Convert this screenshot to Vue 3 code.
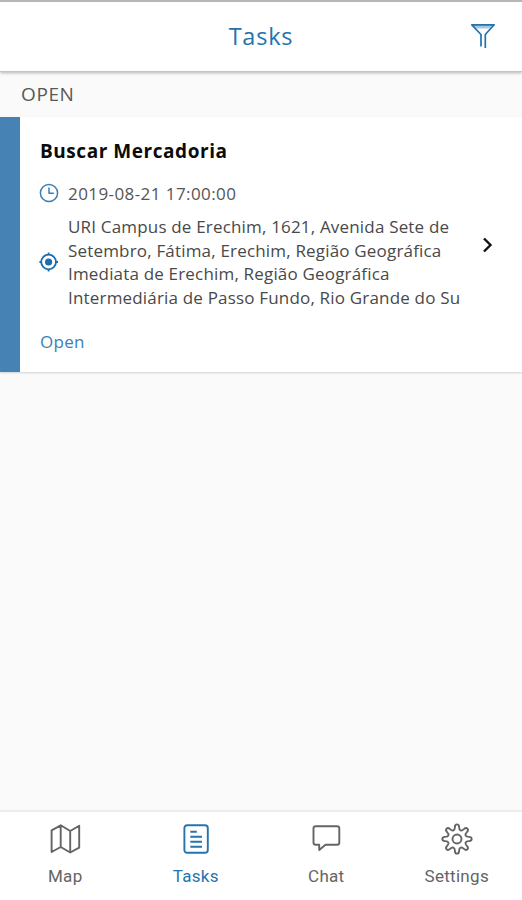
<script setup>
const address = [
  'URI Campus de Erechim, 1621, Avenida Sete de',
  'Setembro, Fátima, Erechim, Região Geográfica',
  'Imediata de Erechim, Região Geográfica',
  'Intermediária de Passo Fundo, Rio Grande do Su',
]

const tabs = [
  { id: 'map', label: 'Map' },
  { id: 'tasks', label: 'Tasks', active: true },
  { id: 'chat', label: 'Chat' },
  { id: 'settings', label: 'Settings' },
]

// Outline of an eight-toothed gear centred on (16, 16), corners softened with curves
const gearPath = (() => {
  const points = []
  for (let tooth = 0; tooth < 8; tooth++) {
    for (const [radius, offset] of [[14.8, -8], [14.8, 8], [9.4, 13], [9.4, 32]]) {
      const angle = ((tooth * 45 + offset - 90) * Math.PI) / 180
      points.push([16 + radius * Math.cos(angle), 16 + radius * Math.sin(angle)])
    }
  }
  const format = (x, y) => `${x.toFixed(2)} ${y.toFixed(2)}`
  const middle = (a, b) => format((a[0] + b[0]) / 2, (a[1] + b[1]) / 2)
  const curves = points.map((p, i) => `Q${format(p[0], p[1])} ${middle(p, points[(i + 1) % points.length])}`)
  return `M${middle(points[points.length - 1], points[0])}${curves.join('')}Z`
})()
</script>

<template>
  <div class="screen">
    <header class="header">
      <span></span>
      <h1 class="title">Tasks</h1>
      <svg class="filter" width="26" height="28" viewBox="0 0 26 28">
        <path class="filter-shade" d="M3 3H23L20 6.5H6Z" />
        <path d="M11 24.5V12.5L1.8 2.8H24.2L15.3 12.5V26" />
      </svg>
    </header>

    <main class="content">
      <h2 class="section">OPEN</h2>
      <article class="card">
        <div class="card-body">
          <h3 class="name">Buscar Mercadoria</h3>
          <div class="row date">
            <svg class="icon" width="20" height="20" viewBox="0 0 20 20">
              <circle cx="10" cy="10" r="8.6" />
              <path d="M10 4.4V10.2H14.8" />
            </svg>
            <time>2019-08-21 17:00:00</time>
          </div>
          <div class="row place">
            <svg class="icon target" width="20" height="20" viewBox="0 0 20 20">
              <circle cx="9.6" cy="10" r="7.4" />
              <circle class="dot" cx="9.6" cy="10" r="3.6" />
              <path d="M9.6 .6V3M9.6 17V19.4M.4 10H3M16.6 10H19" />
            </svg>
            <p class="address">
              <span v-for="line in address" :key="line">{{ line }}</span>
            </p>
          </div>
          <span class="status">Open</span>
        </div>
        <svg class="chevron" width="14" height="18" viewBox="0 0 14 18">
          <path d="M3 2.5L9.5 9L3 15.5" />
        </svg>
      </article>
    </main>

    <nav class="tabs">
      <a v-for="tab in tabs" :key="tab.id" class="tab" :class="{ active: tab.active }">
        <svg width="32" height="32" viewBox="0 0 32 32">
          <path v-if="tab.id === 'map'" d="M2.6 7.3L11.7 2.3L21.2 8L30.2 2.8V24.7L21.2 29.5L11.7 24L2.6 29ZM11.7 2.3V24M21.2 8V29.5" />
          <template v-else-if="tab.id === 'tasks'">
            <rect x="4.4" y="2.2" width="23.4" height="27.6" rx="2.8" />
            <path d="M10.3 8.8H16.8M10.3 13.8H22M10.3 18.8H22M10.3 23.8H22" />
          </template>
          <path v-else-if="tab.id === 'chat'" d="M5.5 3.2H27Q29.3 3.2 29.3 5.5V19.5Q29.3 21.8 27 21.8H15.5L9.2 27V21.8H5.8Q3.5 21.8 3.5 19.5V5.5Q3.5 3.2 5.8 3.2Z" />
          <template v-else>
            <path :d="gearPath" />
            <circle cx="16" cy="16" r="4.5" />
          </template>
        </svg>
        <span>{{ tab.label }}</span>
      </a>
    </nav>
  </div>
</template>

<style>
body {
  margin: 0;
}
</style>

<style scoped>
.screen {
  display: flex;
  flex-direction: column;
  box-sizing: border-box;
  width: 100%;
  height: 100vh;
  overflow: hidden;
  border-top: 2px solid #b6b6b6;
  background: #fafafa;
  font-family: 'Open Sans', sans-serif;
  color: #555;
}
h1, h2, h3, p {
  margin: 0;
}
svg {
  display: block;
  flex: none;
  fill: none;
  stroke: currentColor;
  stroke-width: 1.9;
  stroke-linejoin: round;
}
.header {
  z-index: 1;
  display: grid;
  grid-template-columns: 1fr auto 1fr;
  align-items: center;
  box-sizing: border-box;
  height: 70px;
  padding: 0 26px 2px 26px;
  border-bottom: 1px solid #c4c4c4;
  background: #fff;
  box-shadow: 0 1px 3px rgba(0, 0, 0, 0.28);
  color: #2373ad;
}
.title {
  font-size: 23.5px;
  font-weight: 500;
  line-height: 32px;
  letter-spacing: 0.8px;
}
.filter {
  justify-self: end;
  stroke-width: 1.7;
}
.filter .filter-shade {
  fill: #a9c8e0;
  stroke: none;
}
.content {
  flex: 1;
}
.section {
  height: 45px;
  padding-left: 21px;
  font-size: 19px;
  font-weight: 400;
  line-height: 44px;
  letter-spacing: 0.6px;
  color: #585858;
}
.card {
  display: flex;
  align-items: center;
  box-sizing: border-box;
  height: 255px;
  padding-right: 27px;
  border-left: 20px solid #4682b4;
  background: #fff;
  box-shadow: 0 1px 2px rgba(0, 0, 0, 0.16);
}
.card-body {
  flex: 1;
  align-self: stretch;
  padding: 21px 0 0 20px;
}
.name {
  font-size: 19px;
  font-weight: 700;
  line-height: 26px;
  letter-spacing: 0.55px;
  color: #0b0b0b;
}
.row {
  display: flex;
  align-items: center;
  gap: 9px;
}
.icon {
  width: 20px;
  margin-left: -1px;
  color: #3a7fb8;
  stroke-width: 1.5;
}
.target {
  color: #1c6dab;
  stroke-width: 1.8;
}
.dot {
  fill: currentColor;
  stroke: none;
}
.date {
  height: 24px;
  margin-top: 17px;
  font-size: 17px;
  letter-spacing: 0.42px;
}
.place {
  margin-top: 10px;
  font-size: 17px;
  letter-spacing: 0.18px;
  color: #494949;
}
.address span {
  display: block;
  height: 23.7px;
  line-height: 23.7px;
  white-space: nowrap;
}
.status {
  display: block;
  margin-top: 19px;
  font-size: 17px;
  line-height: 26px;
  letter-spacing: 0.3px;
  color: #3c80b7;
}
.chevron {
  color: #111;
  stroke-width: 2.4;
  stroke-linejoin: miter;
}
.tabs {
  display: grid;
  grid-template-columns: repeat(4, 1fr);
  box-sizing: border-box;
  height: 90px;
  border-top: 2px solid #ececec;
  background: #fff;
  font-family: Roboto, sans-serif;
  font-size: 17px;
  letter-spacing: 0.3px;
  color: #646464;
}
.tab {
  display: flex;
  flex-direction: column;
  align-items: center;
  gap: 10px;
  padding-top: 11px;
  line-height: 22px;
}
.active {
  color: #2574ad;
}
</style>
